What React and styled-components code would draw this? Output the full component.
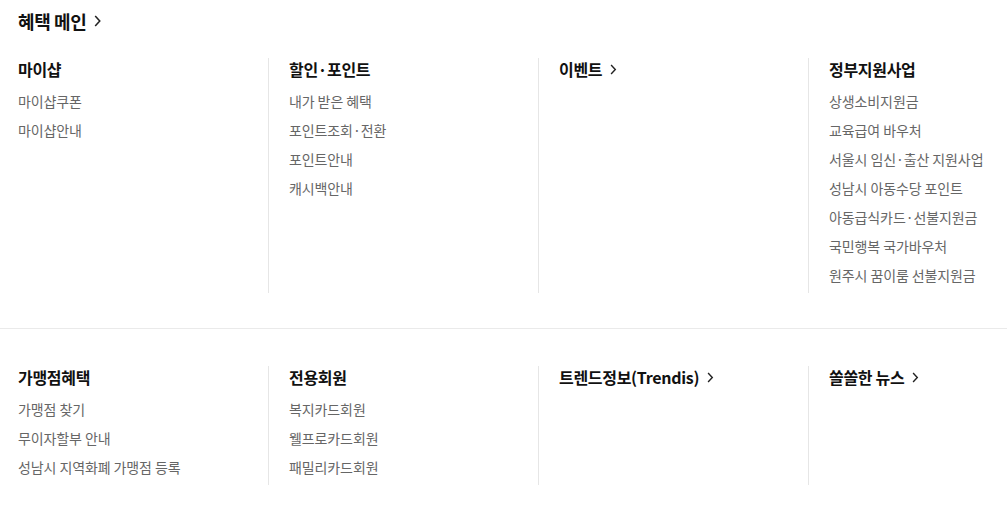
import React from 'react';
import styled, { createGlobalStyle } from 'styled-components';

const GlobalStyle = createGlobalStyle`
  html, body {
    margin: 0;
    padding: 0;
    background: #fff;
  }
  body {
    font-family: "Noto Sans CJK KR", "Noto Sans", sans-serif;
    color: #111;
  }
`;

const Page = styled.div`
  width: 1007px;
`;

const Title = styled.a`
  display: inline-flex;
  align-items: center;
  gap: 8px;
  margin: 10px 0 0 18px;
  font-size: 18px;
  line-height: 22px;
  font-weight: 700;
  color: #111;
  letter-spacing: -0.4px;
  text-decoration: none;
`;

const Section = styled.div`
  display: grid;
  grid-template-columns: 268px 270px 270px 1fr;
  padding: ${({ $top }) => $top}px 0 ${({ $bottom }) => $bottom}px;
  border-bottom: ${({ $line }) => ($line ? '1px solid #eaeaea' : 'none')};
`;

const Column = styled.div`
  padding: 0 0 3px ${({ $first }) => ($first ? '18px' : '20px')};
  border-left: ${({ $first }) => ($first ? 'none' : '1px solid #e6e6e6')};
`;

const Heading = styled.div`
  display: flex;
  align-items: center;
  gap: 8px;
  font-size: 16px;
  line-height: 22px;
  font-weight: 700;
  color: #111;
  letter-spacing: -0.3px;
  margin-bottom: 7px;
`;

const List = styled.ul`
  list-style: none;
  margin: 0;
  padding: 0;
`;

const Item = styled.li`
  font-size: 14px;
  line-height: 29px;
  color: #666;
  letter-spacing: -0.1px;
`;

const Chevron = ({ size = 11 }) => (
  <svg width={size * 0.6} height={size} viewBox="0 0 6 11" fill="none">
    <polyline points="0.8,1 5,5.5 0.8,10" stroke="#222" strokeWidth="1.4" />
  </svg>
);

const top = [
  { title: '마이샵', items: ['마이샵쿠폰', '마이샵안내'] },
  { title: '할인·포인트', items: ['내가 받은 혜택', '포인트조회·전환', '포인트안내', '캐시백안내'] },
  { title: '이벤트', link: true, items: [] },
  {
    title: '정부지원사업',
    items: [
      '상생소비지원금',
      '교육급여 바우처',
      '서울시 임신·출산 지원사업',
      '성남시 아동수당 포인트',
      '아동급식카드·선불지원금',
      '국민행복 국가바우처',
      '원주시 꿈이룸 선불지원금',
    ],
  },
];

const bottom = [
  { title: '가맹점혜택', items: ['가맹점 찾기', '무이자할부 안내', '성남시 지역화폐 가맹점 등록'] },
  { title: '전용회원', items: ['복지카드회원', '웰프로카드회원', '패밀리카드회원'] },
  { title: '트렌드정보(Trendis)', link: true, items: [] },
  { title: '쏠쏠한 뉴스', link: true, items: [] },
];

const Row = ({ data, ...rest }) => (
  <Section {...rest}>
    {data.map((col, i) => (
      <Column key={col.title} $first={i === 0}>
        <Heading>
          {col.title}
          {col.link && <Chevron size={11} />}
        </Heading>
        <List>
          {col.items.map((t) => (
            <Item key={t}>{t}</Item>
          ))}
        </List>
      </Column>
    ))}
  </Section>
);

export default function App() {
  return (
    <Page>
      <GlobalStyle />
      <Title href="#">
        혜택 메인
        <Chevron size={12} />
      </Title>
      <Row data={top} $top={24} $bottom={35} $line />
      <Row data={bottom} $top={37} $bottom={20} />
    </Page>
  );
}
